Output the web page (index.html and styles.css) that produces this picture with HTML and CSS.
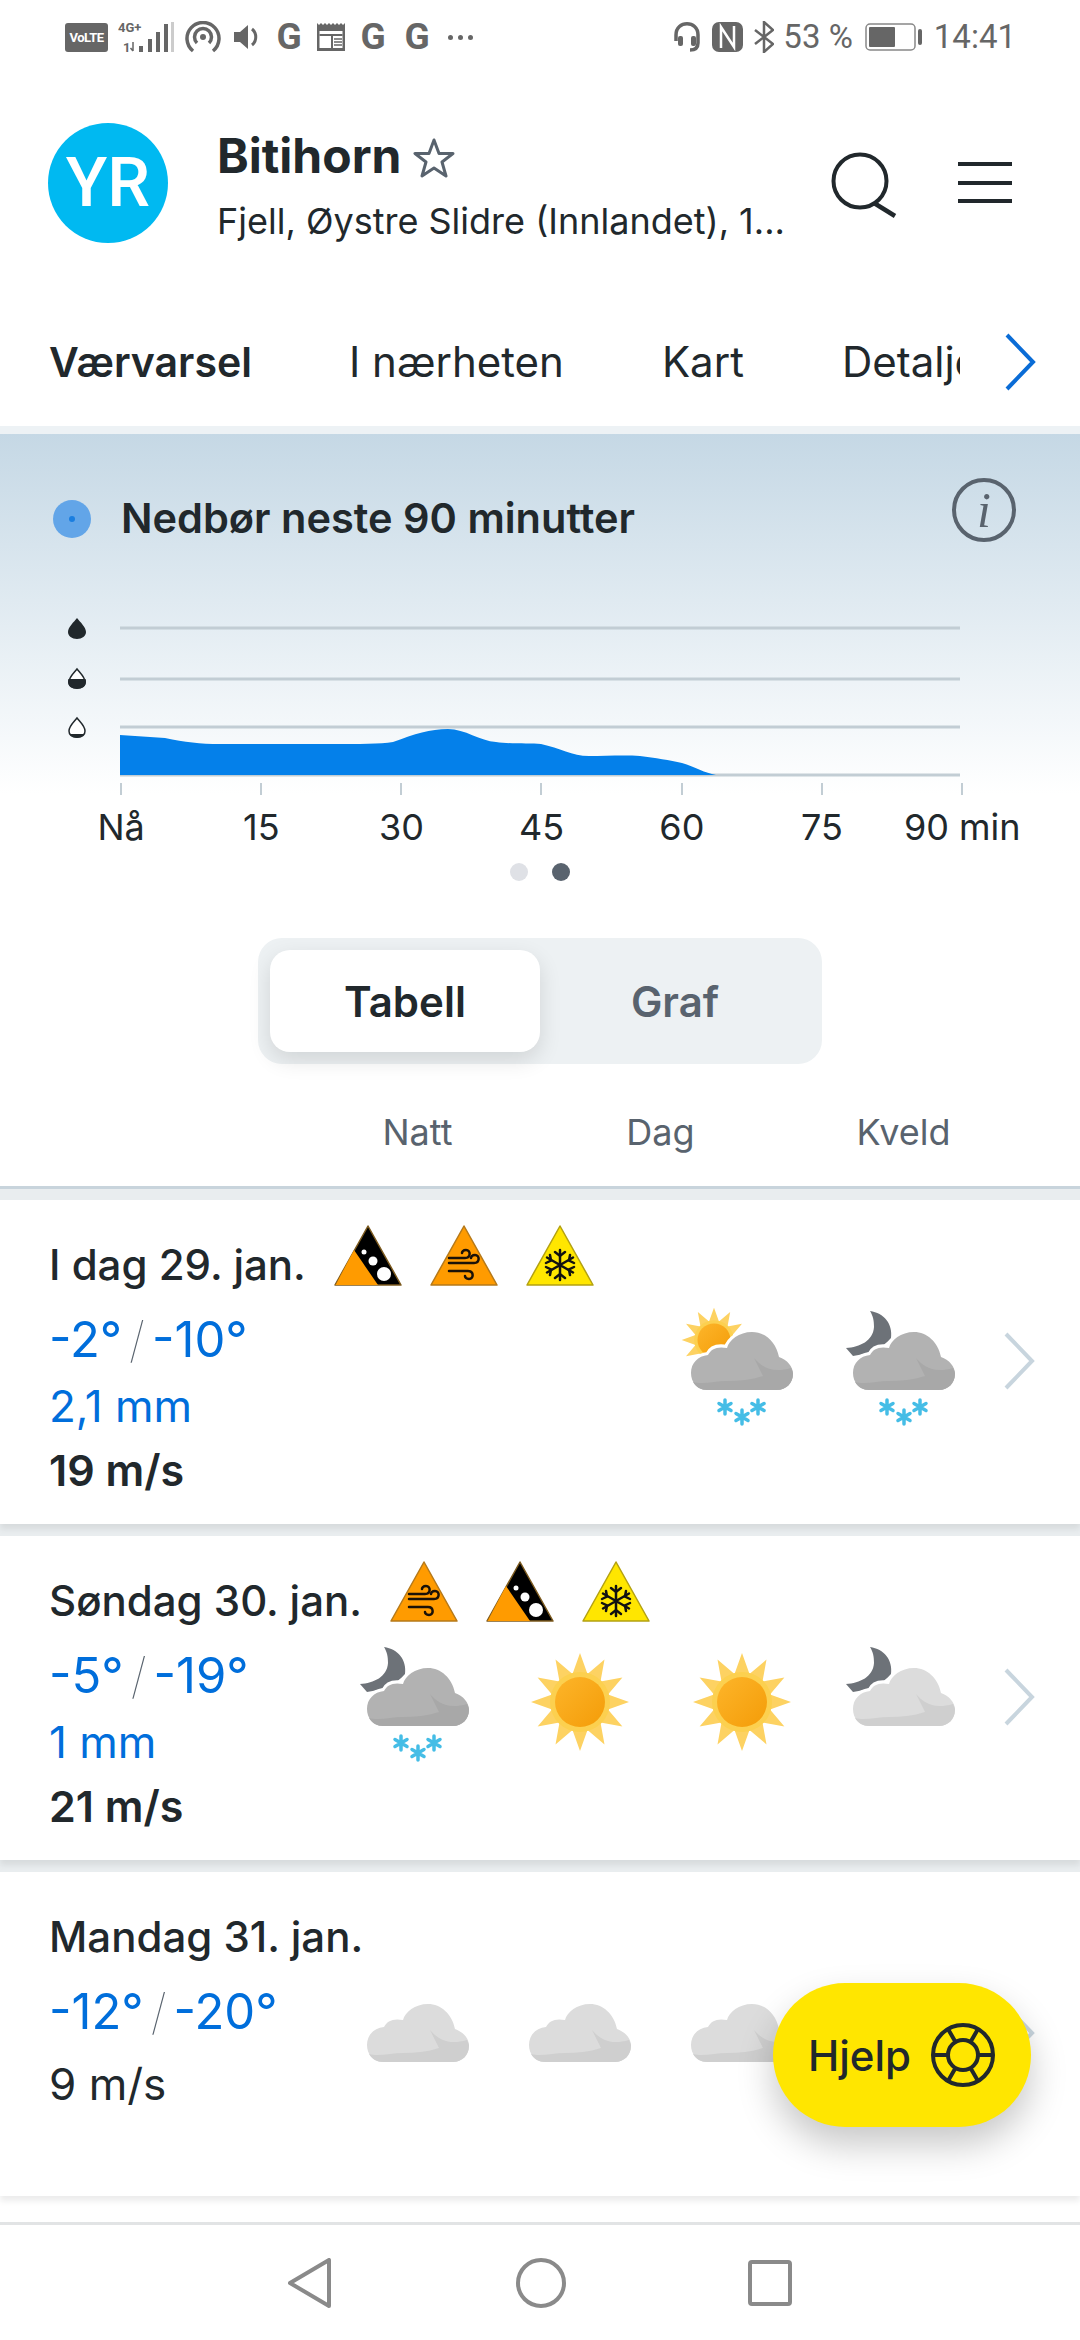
FILE: index.html
```html
<!DOCTYPE html>
<html lang="no">
<head>
    <meta charset="UTF-8">
    <meta name="viewport" content="width=device-width, initial-scale=1.0">
    <title>Bitihorn - Yr</title>
    <link rel="stylesheet" href="styles.css">
</head>
<body>
    <!-- Shared icons -->
    <svg class="defs" aria-hidden="true">
        <defs>
            <linearGradient id="core" x1="0" y1="0" x2="1" y2="1">
                <stop offset="0" stop-color="#fdb52a"/>
                <stop offset="1" stop-color="#f49c08"/>
            </linearGradient>
            <symbol id="sun" viewBox="-50 -50 100 100">
                <polygon fill="#fdd262" points="0,-49 7.5,-28 24.5,-42.4 20.5,-20.5 42.4,-24.5 28,-7.5 49,0 28,7.5 42.4,24.5 20.5,20.5 24.5,42.4 7.5,28 0,49 -7.5,28 -24.5,42.4 -20.5,20.5 -42.4,24.5 -28,7.5 -49,0 -28,-7.5 -42.4,-24.5 -20.5,-20.5 -24.5,-42.4 -7.5,-28"/>
                <circle r="30" fill="#fcd04f"/>
                <circle r="25" fill="url(#core)"/>
            </symbol>
            <symbol id="moon" viewBox="0 0 120 120">
                <path fill="#6d7278" d="M27 3C41 5 50 16 48 30C40 40 25 46 10 48L3 40C17 39 30 33 31 19C31 12 30 8 27 3Z"/>
            </symbol>
            <symbol id="cloud-grey" viewBox="0 0 120 120">
                <path fill="#b2b2b2" stroke="#fff" stroke-width="6" paint-order="stroke" d="M26 82C16 82 10 74 10 65C10 55 17 48 27 47C30 41 36 38 46 40C48 32 58 24 71 24C84 24 95 34 98 49C106 52 112 58 112 66C112 75 105 82 96 82Z"/>
                <path fill="#a8a8a8" d="M12 74C22 77 34 73 46 73C58 73 70 72 82 68C79 62 76 56 73 50C80 58 90 66 110 60C111 62 112 64 112 66C112 75 105 82 96 82H26C20 82 15 79 12 74Z"/>
            </symbol>
            <symbol id="cloud-light" viewBox="0 0 120 120">
                <path fill="#dcdcdc" stroke="#fff" stroke-width="6" paint-order="stroke" d="M26 82C16 82 10 74 10 65C10 55 17 48 27 47C30 41 36 38 46 40C48 32 58 24 71 24C84 24 95 34 98 49C106 52 112 58 112 66C112 75 105 82 96 82Z"/>
                <path fill="#cfcfcf" d="M12 74C22 77 34 73 46 73C58 73 70 72 82 68C79 62 76 56 73 50C80 58 90 66 110 60C111 62 112 64 112 66C112 75 105 82 96 82H26C20 82 15 79 12 74Z"/>
            </symbol>
            <symbol id="snow" viewBox="0 0 120 120">
                <g stroke="#45bde6" stroke-width="3.500" stroke-linecap="round">
                    <path d="M44 92V106M38 95.500L50 102.500M38 102.500L50 95.500"/>
                    <path d="M61 102V116M55 105.500L67 112.500M55 112.500L67 105.500"/>
                    <path d="M77 92V106M71 95.500L83 102.500M71 102.500L83 95.500"/>
                </g>
            </symbol>
            <symbol id="sun-snow" viewBox="0 0 120 120">
                <use href="#sun" x="0" y="-1" width="66" height="66"/>
                <use href="#cloud-grey" width="120" height="120"/>
                <use href="#snow" width="120" height="120"/>
            </symbol>
            <symbol id="moon-snow" viewBox="0 0 120 120">
                <use href="#moon" width="120" height="120"/>
                <use href="#cloud-grey" width="120" height="120"/>
                <use href="#snow" width="120" height="120"/>
            </symbol>
            <symbol id="moon-cloud" viewBox="0 0 120 120">
                <use href="#moon" width="120" height="120"/>
                <use href="#cloud-light" width="120" height="120"/>
            </symbol>
            <symbol id="warn-slide" viewBox="0 0 68 61">
                <path fill="#000" stroke="#7c5a1e" stroke-width="1.500" stroke-linejoin="round" d="M34 1L67 60H1Z"/>
                <path fill="#ff9b00" d="M20 25L44 60H1.500Z"/>
                <circle cx="30" cy="27" r="2.500" fill="#fff"/>
                <circle cx="39" cy="36" r="4.500" fill="#fff"/>
                <circle cx="50" cy="49" r="7" fill="#fff"/>
            </symbol>
            <symbol id="warn-wind" viewBox="0 0 68 61">
                <path fill="#ff9b00" stroke="#b5791a" stroke-width="1.500" stroke-linejoin="round" d="M34 1L67 60H1Z"/>
                <g fill="none" stroke="#1a1208" stroke-width="2.500" stroke-linecap="round">
                    <path d="M19 33H35C41 33 41 25 36 25C33 25 32 27 32 28"/>
                    <path d="M19 38H44C50 38 50 30 45 30C42 30 41 32 41 33"/>
                    <path d="M19 46H38C44 46 44 54 39 54C36 54 35 52 35 51"/>
                </g>
            </symbol>
            <symbol id="warn-snow" viewBox="0 0 68 61">
                <path fill="#ffe600" stroke="#b3a112" stroke-width="1.500" stroke-linejoin="round" d="M34 1L67 60H1Z"/>
                <g fill="none" stroke="#111" stroke-width="2.500" stroke-linecap="round">
                    <path d="M34 25V55M21 32.500L47 47.500M21 47.500L47 32.500"/>
                    <path d="M29 27L34 31L39 27M29 53L34 49L39 53"/>
                    <path d="M20 38L25 35.500L24 30M48 42L43 44.500L44 50M20 42L25 44.500L24 50M48 38L43 35.500L44 30"/>
                </g>
            </symbol>
            <symbol id="chev" viewBox="0 0 32 60">
                <path fill="none" stroke="#c8d5de" stroke-width="4" d="M3 3L29 30L3 57"/>
            </symbol>
        </defs>
    </svg>

    <div class="status">
        <div class="status-left">
            <span class="volte">VoLTE</span>
            <svg class="s-signal" viewBox="0 0 56 32">
                <text x="0" y="11" class="s-tiny">4G+</text>
                <text x="5" y="31" class="s-tiny">1</text>
                <path fill="none" stroke="#666" stroke-width="1.500" d="M15 21V30M12.500 27L15 30"/>
                <rect x="21" y="25" width="4" height="6" fill="#666"/>
                <rect x="30" y="18" width="4" height="13" fill="#666"/>
                <rect x="38" y="11" width="4" height="20" fill="#666"/>
                <rect x="46" y="3" width="4" height="28" fill="#666"/>
                <rect x="53" y="1" width="3" height="30" fill="#ccc"/>
            </svg>
            <svg class="s-hotspot" viewBox="0 0 36 32">
                <g fill="none" stroke="#666" stroke-width="3.500">
                    <path d="M8 30A16 16 0 1 1 28 30"/>
                    <path d="M12 22A8.500 8.500 0 1 1 24 22"/>
                </g>
                <circle cx="18" cy="16" r="3" fill="#666"/>
            </svg>
            <svg class="s-speaker" viewBox="0 0 26 26">
                <path fill="#666" d="M0 8H6L14 1V25L6 18H0Z"/>
                <path fill="none" stroke="#666" stroke-width="3" d="M18 5C23 9 23 17 18 21"/>
            </svg>
            <span class="s-g">G</span>
            <svg class="s-news" viewBox="0 0 28 28">
                <path fill="#666" d="M0 0L2 2L4 0L6 2L8 0L10 2L12 0L14 2L16 0L18 2L20 0L22 2L24 0L26 2L28 0V28H0Z"/>
                <rect x="2.500" y="8" width="23" height="17" fill="#fff"/>
                <rect x="2.500" y="11" width="23" height="2" fill="#666"/>
                <rect x="14" y="13" width="2" height="12" fill="#666"/>
                <path stroke="#666" stroke-width="1.500" d="M17 16H25M17 19H25M17 22H25"/>
            </svg>
            <span class="s-g">G</span>
            <span class="s-g">G</span>
            <span class="s-dots">
                <i></i><i></i><i></i>
            </span>
        </div>
        <div class="status-right">
            <svg class="s-headset" viewBox="0 0 28 32">
                <path fill="none" stroke="#666" stroke-width="3.500" d="M3 20V14C3 -1 25 -1 25 14V22C25 27 22 29 17 29"/>
                <rect x="5" y="15" width="5" height="10" rx="2" fill="#666"/>
                <rect x="18" y="15" width="5" height="10" rx="2" fill="#666"/>
            </svg>
            <svg class="s-nfc" viewBox="0 0 31 30">
                <rect width="31" height="30" rx="7" fill="#666"/>
                <path fill="none" stroke="#fff" stroke-width="2.500" d="M9 26V5L22 25V4"/>
            </svg>
            <svg class="s-bt" viewBox="0 0 20 32">
                <path fill="none" stroke="#666" stroke-width="2.500" d="M1 9L19 23L10 31V1L19 9L1 23"/>
            </svg>
            <span class="s-pct">53 %</span>
            <svg class="s-batt" viewBox="0 0 57 28">
                <rect x="1" y="1" width="49" height="26" rx="4" fill="none" stroke="#888" stroke-width="1.500"/>
                <rect x="4" y="4" width="26" height="20" rx="1" fill="#666"/>
                <rect x="53" y="6" width="4" height="16" rx="2" fill="#666"/>
            </svg>
            <span class="s-time">14:41</span>
        </div>
    </div>

    <header class="head">
        <div class="logo">YR</div>
        <div class="place">
            <div class="place-name">
                <h1>Bitihorn</h1>
                <svg class="star" viewBox="0 0 42 40">
                    <path fill="none" stroke="#59636e" stroke-width="3" stroke-linejoin="round" d="M21 2L26 15.500H40L29 24L33 38L21 30L9 38L13 24L2 15.500H16Z"/>
                </svg>
            </div>
            <div class="place-sub">Fjell, Øystre Slidre (Innlandet), 1...</div>
        </div>
        <svg class="search" viewBox="0 0 70 70">
            <circle cx="31" cy="30" r="26.500" fill="none" stroke="#21282c" stroke-width="4"/>
            <path stroke="#21282c" stroke-width="4.500" d="M45 52L66 65"/>
        </svg>
        <div class="menu"><i></i><i></i><i></i></div>
    </header>

    <nav class="tabs">
        <div class="tab-list">
            <a class="tab active">Værvarsel</a>
            <a class="tab">I nærheten</a>
            <a class="tab">Kart</a>
            <a class="tab">Detaljer</a>
        </div>
        <svg class="tab-more" viewBox="0 0 32 60">
            <path fill="none" stroke="#0a6cd6" stroke-width="4" d="M3 3L29 30L3 57"/>
        </svg>
    </nav>

    <section class="nowcast">
        <div class="nowcast-title">
            <span class="pulse"><i></i></span>
            <h2>Nedbør neste 90 minutter</h2>
            <span class="info">i</span>
        </div>
        <svg class="nowcast-chart" viewBox="0 0 1080 190">
            <g fill="#21282c">
                <path transform="translate(68 8)" d="M9 0C12 4 18 9 18 14C18 18 14 21 9 21C4 21 0 18 0 14C0 9 6 4 9 0Z"/>
                <g transform="translate(68 58)">
                    <path fill="#fff" stroke="#21282c" stroke-width="1.500" d="M9 1C12 5 17 9 17 14C17 18 14 20 9 20C4 20 1 18 1 14C1 9 6 5 9 1Z"/>
                    <path d="M.5 11H17.500C18 12 18 13 18 14C18 18 14 21 9 21C4 21 0 18 0 14C0 13 0 12 .5 11Z"/>
                </g>
                <g transform="translate(68 107)">
                    <path fill="#fff" stroke="#21282c" stroke-width="1.500" d="M9 1C12 5 17 9 17 14C17 18 14 20 9 20C4 20 1 18 1 14C1 9 6 5 9 1Z"/>
                    <path d="M2 17H16C15 20 12 21 9 21C6 21 3 20 2 17Z"/>
                </g>
            </g>
            <path stroke="#c2cdd4" stroke-width="3" d="M120 18H960M120 69H960M120 117H960M120 165H960"/>
            <path fill="#0480ea" d="M120 125C135 126 150 127 165 128C185 132 200 134 220 134C260 134 300 134 331 134C360 134 380 134 393 132C415 124 430 119 448 119C465 119 480 131 496 132C510 134 530 133 541 134C560 138 572 146 589 146C605 146 625 145 640 146C655 148 670 150 682 153C695 157 705 163 716 165H120Z"/>
            <path stroke="#c2cdd4" stroke-width="2" d="M121 173V185M261 173V185M401 173V185M541 173V185M682 173V185M822 173V185M962 173V185"/>
        </svg>
        <div class="nowcast-labels">
            <span>Nå</span><span>15</span><span>30</span><span>45</span><span>60</span><span>75</span><span>90 min</span>
        </div>
        <div class="pager"><i></i><i class="on"></i></div>
    </section>

    <div class="switch">
        <div class="switch-tray">
            <span class="switch-opt on">Tabell</span>
            <span class="switch-opt">Graf</span>
        </div>
    </div>

    <div class="columns">
        <span>Natt</span><span>Dag</span><span>Kveld</span>
    </div>

    <main class="days">
        <article class="day">
            <div class="day-title">
                <h3>I dag 29. jan.</h3>
                <svg class="warn"><use href="#warn-slide"/></svg>
                <svg class="warn"><use href="#warn-wind"/></svg>
                <svg class="warn"><use href="#warn-snow"/></svg>
            </div>
            <div class="day-body">
                <div class="day-info">
                    <div class="temp">-2°<span class="slash">/</span>-10°</div>
                    <div class="rain">2,1 mm</div>
                    <div class="wind strong">19 m/s</div>
                </div>
                <div class="slots">
                    <svg class="slot"><use href="#sun-snow"/></svg>
                    <svg class="slot"><use href="#moon-snow"/></svg>
                </div>
                <svg class="chev"><use href="#chev"/></svg>
            </div>
        </article>

        <article class="day">
            <div class="day-title">
                <h3>Søndag 30. jan.</h3>
                <svg class="warn"><use href="#warn-wind"/></svg>
                <svg class="warn"><use href="#warn-slide"/></svg>
                <svg class="warn"><use href="#warn-snow"/></svg>
            </div>
            <div class="day-body">
                <div class="day-info">
                    <div class="temp">-5°<span class="slash">/</span>-19°</div>
                    <div class="rain">1 mm</div>
                    <div class="wind strong">21 m/s</div>
                </div>
                <div class="slots">
                    <svg class="slot"><use href="#moon-snow"/></svg>
                    <svg class="slot"><use href="#sun" x="11" y="8" width="100" height="100"/></svg>
                    <svg class="slot"><use href="#sun" x="11" y="8" width="100" height="100"/></svg>
                    <svg class="slot"><use href="#moon-cloud"/></svg>
                </div>
                <svg class="chev"><use href="#chev"/></svg>
            </div>
        </article>

        <article class="day">
            <div class="day-title">
                <h3>Mandag 31. jan.</h3>
            </div>
            <div class="day-body">
                <div class="day-info">
                    <div class="temp">-12°<span class="slash">/</span>-20°</div>
                    <div class="wind">9 m/s</div>
                </div>
                <div class="slots">
                    <svg class="slot"><use href="#cloud-light"/></svg>
                    <svg class="slot"><use href="#cloud-light"/></svg>
                    <svg class="slot"><use href="#cloud-light"/></svg>
                    <svg class="slot"><use href="#cloud-light"/></svg>
                </div>
                <svg class="chev"><use href="#chev"/></svg>
            </div>
        </article>
    </main>

    <footer class="navbar">
        <svg class="nav-back" viewBox="0 0 44 50">
            <path fill="none" stroke="#8a8a8a" stroke-width="4" stroke-linejoin="round" d="M41 2V48L2 25Z"/>
        </svg>
        <svg class="nav-home" viewBox="0 0 50 50">
            <circle cx="25" cy="25" r="23" fill="none" stroke="#8a8a8a" stroke-width="4"/>
        </svg>
        <svg class="nav-recent" viewBox="0 0 44 46">
            <rect x="2" y="2" width="40" height="42" rx="2" fill="none" stroke="#8a8a8a" stroke-width="4"/>
        </svg>
    </footer>

    <button class="help">
        <span>Hjelp</span>
        <svg viewBox="0 0 68 68">
            <g fill="none" stroke="#21282c" stroke-width="4">
                <circle cx="34" cy="34" r="30"/>
                <circle cx="34" cy="34" r="15"/>
                <path d="M41.500 21L49 8M26.500 21L19 8M49 34H64M19 34H4M41.500 47L49 60M26.500 47L19 60"/>
            </g>
        </svg>
    </button>
</body>
</html>
```

FILE: styles.css
```css
/* General page */
* {
    box-sizing: border-box;
}

body {
    position: relative;
    width: 1080px;
    height: 2340px;
    margin: 0;
    overflow: hidden;
    background-color: #ffffff;
    color: #21282c;
    font-family: Inter, Roboto, sans-serif;
}

h1, h2, h3 {
    margin: 0;
}

.defs {
    position: absolute;
    width: 0;
    height: 0;
}

/* Phone status bar */
.status {
    display: flex;
    justify-content: space-between;
    align-items: center;
    height: 74px;
    padding: 0 64px 0 65px;
    color: #666666;
    font-family: Roboto, sans-serif;
}

.status-left, .status-right {
    display: flex;
    align-items: center;
}

.volte {
    width: 43px;
    height: 29px;
    border-radius: 3px;
    background-color: #666666;
    color: #ffffff;
    font-size: 13px;
    font-weight: bold;
    line-height: 29px;
    text-align: center;
    letter-spacing: -0.5px;
}

.s-signal {
    width: 56px;
    height: 32px;
    margin-left: 10px;
}

.s-tiny {
    fill: #666666;
    font-size: 13px;
    font-weight: bold;
}

.s-hotspot {
    width: 36px;
    height: 32px;
    margin-left: 11px;
}

.s-speaker {
    width: 26px;
    height: 26px;
    margin-left: 13px;
}

.s-g {
    width: 30px;
    margin-left: 14px;
    font-size: 37px;
    font-weight: bold;
    line-height: 32px;
    text-align: center;
}

.s-news {
    width: 28px;
    height: 28px;
    margin-left: 13px;
}

.s-news + .s-g {
    margin-left: 13px;
}

.s-dots {
    display: flex;
    gap: 5px;
    margin-left: 16px;
}

.s-dots i {
    width: 5px;
    height: 5px;
    border-radius: 50%;
    background-color: #666666;
}

.s-headset {
    width: 28px;
    height: 32px;
}

.s-nfc {
    width: 31px;
    height: 30px;
    margin-left: 11px;
}

.s-bt {
    width: 20px;
    height: 32px;
    margin-left: 11px;
}

.s-pct, .s-time {
    font-size: 33px;
    line-height: 32px;
}

.s-pct {
    margin-left: 9px;
}

.s-batt {
    width: 57px;
    height: 28px;
    margin-left: 12px;
}

.s-time {
    margin-left: 12px;
}

/* Place header */
.head {
    display: flex;
    align-items: flex-start;
    height: 224px;
    padding: 49px 0 0 48px;
}

.logo {
    flex: none;
    width: 120px;
    height: 120px;
    border-radius: 50%;
    background-color: #00b9f1;
    color: #ffffff;
    font-family: Roboto, sans-serif;
    font-size: 68px;
    font-weight: 500;
    line-height: 120px;
    text-align: center;
}

.place {
    width: 580px;
    margin-left: 49px;
}

.place-name {
    display: flex;
    align-items: center;
    height: 70px;
}

.place-name h1 {
    margin-top: -6px;
    font-size: 48px;
    font-weight: 700;
}

.star {
    width: 42px;
    height: 40px;
    margin-left: 12px;
}

.place-sub {
    font-size: 36px;
    line-height: 56px;
    white-space: nowrap;
}

.search {
    flex: none;
    width: 70px;
    height: 70px;
    margin: 28px 0 0 32px;
}

.menu {
    display: flex;
    flex-direction: column;
    gap: 14.5px;
    width: 54px;
    margin: 39px 0 0 59px;
}

.menu i {
    height: 4px;
    background-color: #21282c;
}

/* Tabs */
.tabs {
    display: flex;
    align-items: flex-start;
    height: 136px;
    border-bottom: 8px solid #edf2f5;
}

.tab-list {
    display: flex;
    width: 960px;
    overflow: hidden;
}

.tab {
    flex: none;
    height: 136px;
    margin-bottom: -8px;
    padding: 0 49px;
    font-size: 42px;
    line-height: 128px;
    white-space: nowrap;
}

.tab.active {
    width: 300px;
    padding: 0 0 0 49px;
    border-bottom: 8px solid #006edb;
    font-size: 41px;
    font-weight: 600;
}

.tab-more {
    width: 32px;
    height: 60px;
    margin: 34px 0 0 44px;
}

/* Precipitation next 90 minutes */
.nowcast {
    height: 484px;
    padding-top: 47px;
    background-image: linear-gradient(#c5d8e5, #ffffff 360px);
}

.nowcast-title {
    display: flex;
    align-items: center;
    height: 76px;
    padding: 0 64px 0 53px;
}

.pulse {
    display: flex;
    align-items: center;
    justify-content: center;
    width: 38px;
    height: 38px;
    border-radius: 50%;
    background-color: #62a5e8;
}

.pulse i {
    width: 6px;
    height: 6px;
    border-radius: 50%;
    background-color: #1a7ee0;
}

.nowcast-title h2 {
    margin: -2px 0 0 30px;
    font-size: 41.5px;
    font-weight: 600;
}

.info {
    width: 64px;
    height: 64px;
    margin: -18px 0 0 auto;
    border: 4px solid #59636e;
    border-radius: 50%;
    color: #59636e;
    font-family: "Liberation Serif", serif;
    font-size: 50px;
    font-style: italic;
    line-height: 56px;
    text-align: center;
}

.nowcast-chart {
    display: block;
    width: 1080px;
    height: 190px;
    margin-top: 53px;
}

.nowcast-labels {
    display: grid;
    grid-template-columns: repeat(7, 140.2px);
    height: 54px;
    margin-left: 51px;
    font-size: 36px;
    line-height: 54px;
    text-align: center;
}

.pager {
    display: flex;
    justify-content: center;
    align-items: center;
    gap: 24px;
    height: 36px;
}

.pager i {
    width: 18px;
    height: 18px;
    border-radius: 50%;
    background-color: #dfe1e6;
}

.pager i.on {
    background-color: #59636e;
}

/* Table / graph switch */
.switch {
    display: flex;
    justify-content: center;
    padding-top: 20px;
}

.switch-tray {
    display: flex;
    width: 564px;
    height: 126px;
    padding: 12px;
    border-radius: 24px;
    background-color: #edf1f3;
}

.switch-opt {
    width: 270px;
    color: #59636e;
    font-size: 42px;
    font-weight: 600;
    line-height: 104px;
    text-align: center;
}

.switch-opt.on {
    border-radius: 20px;
    background-color: #ffffff;
    box-shadow: 0 8px 22px rgba(0, 0, 0, 0.12);
    color: #21282c;
}

/* Column headings */
.columns {
    display: grid;
    grid-template-columns: repeat(3, 243px);
    height: 125px;
    padding: 44px 0 0 296px;
    border-bottom: 3px solid #c8d4dc;
    color: #59636e;
    font-size: 36px;
    line-height: 48px;
    text-align: center;
}

/* Day rows */
.days {
    padding-top: 11px;
    background-color: #e9edef;
}

.day {
    height: 324px;
    margin-bottom: 12px;
    padding: 25px 45px 0 49px;
    background-color: #ffffff;
    box-shadow: 0 5px 6px rgba(0, 0, 0, 0.08);
}

.day-title {
    display: flex;
    align-items: flex-start;
    gap: 28px;
    height: 80px;
}

.day-title h3 {
    font-size: 42px;
    font-weight: 500;
    line-height: 80px;
}

.warn {
    width: 68px;
    height: 61px;
}

.day-body {
    display: flex;
    align-items: flex-start;
}

.day-info {
    flex: 1;
}

.temp {
    color: #006edb;
    font-size: 49px;
    line-height: 70px;
}

.slash {
    margin: 0 7px;
    color: #59636e;
    font-weight: 100;
}

.rain {
    color: #006edb;
    font-size: 44px;
    line-height: 62px;
}

.wind {
    font-size: 44px;
    line-height: 66px;
}

.temp + .wind {
    margin-top: 4px;
}

.wind.strong {
    font-size: 43px;
    font-weight: 600;
}

.slots {
    display: flex;
    gap: 42px;
    margin: 3px 0 0 0;
}

.slot {
    width: 120px;
    height: 120px;
}

.chev {
    flex: none;
    width: 32px;
    height: 60px;
    margin: 26px 0 0 40px;
}

/* Bottom nav bar */
.navbar {
    display: flex;
    position: absolute;
    bottom: 0;
    left: 0;
    width: 1080px;
    height: 118px;
    border-top: 3px solid #e2e4e5;
    background-color: #ffffff;
}

.nav-back {
    width: 44px;
    height: 50px;
    margin: 33px 0 0 288px;
}

.nav-home {
    width: 50px;
    height: 50px;
    margin: 33px 0 0 184px;
}

.nav-recent {
    width: 44px;
    height: 46px;
    margin: 35px 0 0 182px;
}

/* Floating help button */
.help {
    display: flex;
    align-items: center;
    gap: 18px;
    position: absolute;
    right: 49px;
    bottom: 213px;
    width: 258px;
    height: 144px;
    padding: 0 0 0 35px;
    border: none;
    border-radius: 72px;
    background-color: #ffe600;
    box-shadow: 0 18px 36px rgba(0, 0, 0, 0.22);
    color: #21282c;
    font-family: inherit;
    font-size: 42px;
    font-weight: 500;
}

.help svg {
    width: 68px;
    height: 68px;
}
```
